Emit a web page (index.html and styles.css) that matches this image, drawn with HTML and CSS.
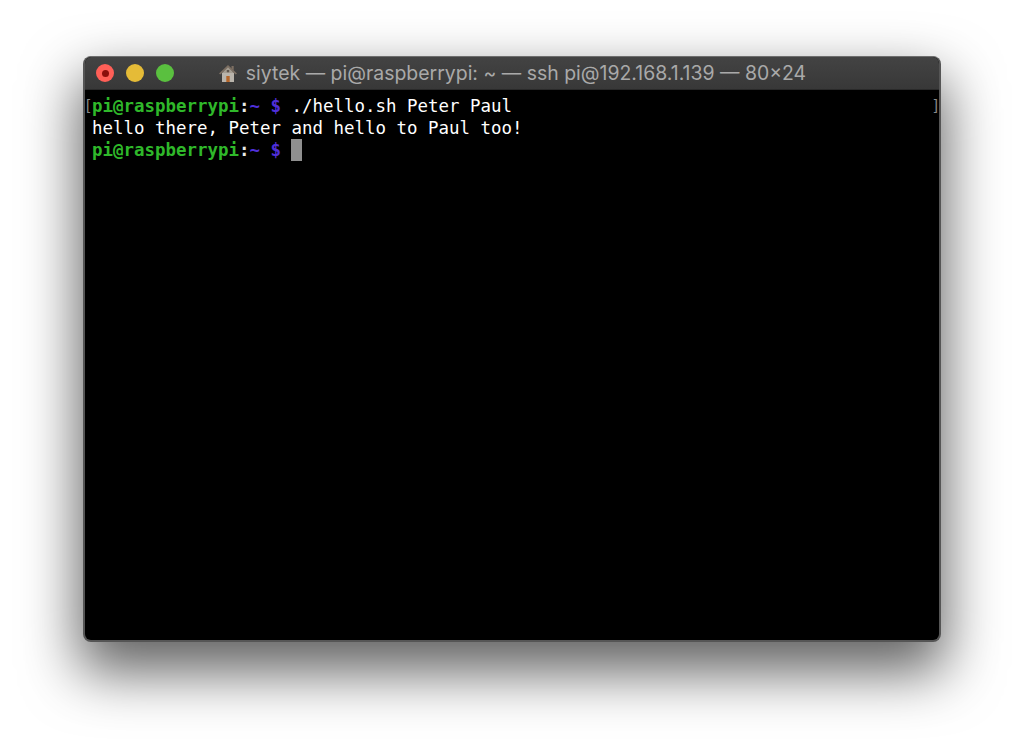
FILE: index.html
```html
<!DOCTYPE html>
<html lang="en">
<head>
<meta charset="utf-8">
<title>Terminal</title>
<link rel="stylesheet" href="styles.css">
</head>
<body>
<main class="window">
  <header class="titlebar">
    <div class="lights">
      <span class="light light-close"><span class="close-dot"></span></span>
      <span class="light light-min"></span>
      <span class="light light-max"></span>
    </div>
    <div class="title">
      <svg class="home" width="20" height="20" viewBox="0 0 20 20" aria-hidden="true">
        <path d="M4 10h12v9H4z" fill="#b9b4ab"/>
        <path d="M1 10.5 10 2l9 8.5-1.3 1L10 4.6 2.300 11.500z" fill="#7d6f62"/>
        <path d="M13.500 3h2.200v4.500l-2.200-2z" fill="#7d6f62"/>
        <path d="M10 4.200 16 10H4z" fill="#a49c90"/>
        <path d="M8.300 13h3.400v6H8.300z" fill="#b5662a"/>
        <path d="M8.800 7h2.400v2.200H8.800z" fill="#5f564d"/>
      </svg>
      <span class="title-text">siytek — pi@raspberrypi: ~ — ssh pi@192.168.1.139 — 80×24</span>
    </div>
  </header>
  <section class="terminal">
    <span class="mark mark-left">[</span>
    <span class="mark mark-right">]</span>
    <div class="line"><span class="host">pi@raspberrypi</span><span class="colon">:</span><span class="prompt">~ $</span> ./hello.sh Peter Paul</div>
    <div class="line">hello there, Peter and hello to Paul too!</div>
    <div class="line"><span class="host">pi@raspberrypi</span><span class="colon">:</span><span class="prompt">~ $</span> <span class="cursor"></span></div>
  </section>
</main>
</body>
</html>
```
FILE: styles.css
```css
html, body {
  margin: 0;
  height: 100%;
  background: #fff;
  overflow: hidden;
}
body {
  padding: 56px 83px 0;
  box-sizing: border-box;
}
.window {
  width: 858px;
  height: 586px;
  box-sizing: border-box;
  display: flex;
  flex-direction: column;
  border: 2px solid #555;
  border-top: 1px solid #6e6e6e;
  border-radius: 8px;
  overflow: hidden;
  background: #000;
  box-shadow: 0 26px 56px 4px rgba(0, 0, 0, 0.62);
}
.titlebar {
  height: 32px;
  flex: none;
  position: relative;
  display: flex;
  align-items: center;
  justify-content: center;
  background: linear-gradient(#434343, #383838);
  border-bottom: 1px solid #2a2a2a;
}
.lights {
  position: absolute;
  left: 11px;
  top: 7px;
  display: flex;
  gap: 12px;
}
.light {
  width: 18px;
  height: 18px;
  border-radius: 50%;
  display: flex;
  align-items: center;
  justify-content: center;
}
.light-close { background: #ff5f57; }
.light-min { background: #e5bb37; }
.light-max { background: #5ac03f; }
.close-dot {
  width: 7px;
  height: 7px;
  border-radius: 50%;
  background: #8c0f0c;
}
.title {
  display: flex;
  align-items: center;
  gap: 8px;
  color: #a9a9a9;
  font: 19.46px Inter, "Liberation Sans", Arial, sans-serif;
  white-space: nowrap;
}
.home { flex: none; }
.terminal {
  flex: 1;
  position: relative;
  padding: 5px 0 0 7px;
  color: #fff;
  font: 17.46px/22px "DejaVu Sans Mono", monospace;
}
.line { height: 22px; white-space: pre; }
.host { color: #2fb82a; font-weight: 700; }
.colon { color: #e8e8e8; font-weight: 700; }
.prompt { color: #4f2fd8; font-weight: 700; }
.cursor {
  display: inline-block;
  width: 11px;
  height: 22px;
  vertical-align: top;
  background: #8f8f8f;
}
.mark {
  position: absolute;
  top: 4px;
  color: #8a8a8a;
  font: 15px/22px "Liberation Sans", Arial, sans-serif;
}
.mark-left { left: 1px; }
.mark-right { right: 1px; }
```
